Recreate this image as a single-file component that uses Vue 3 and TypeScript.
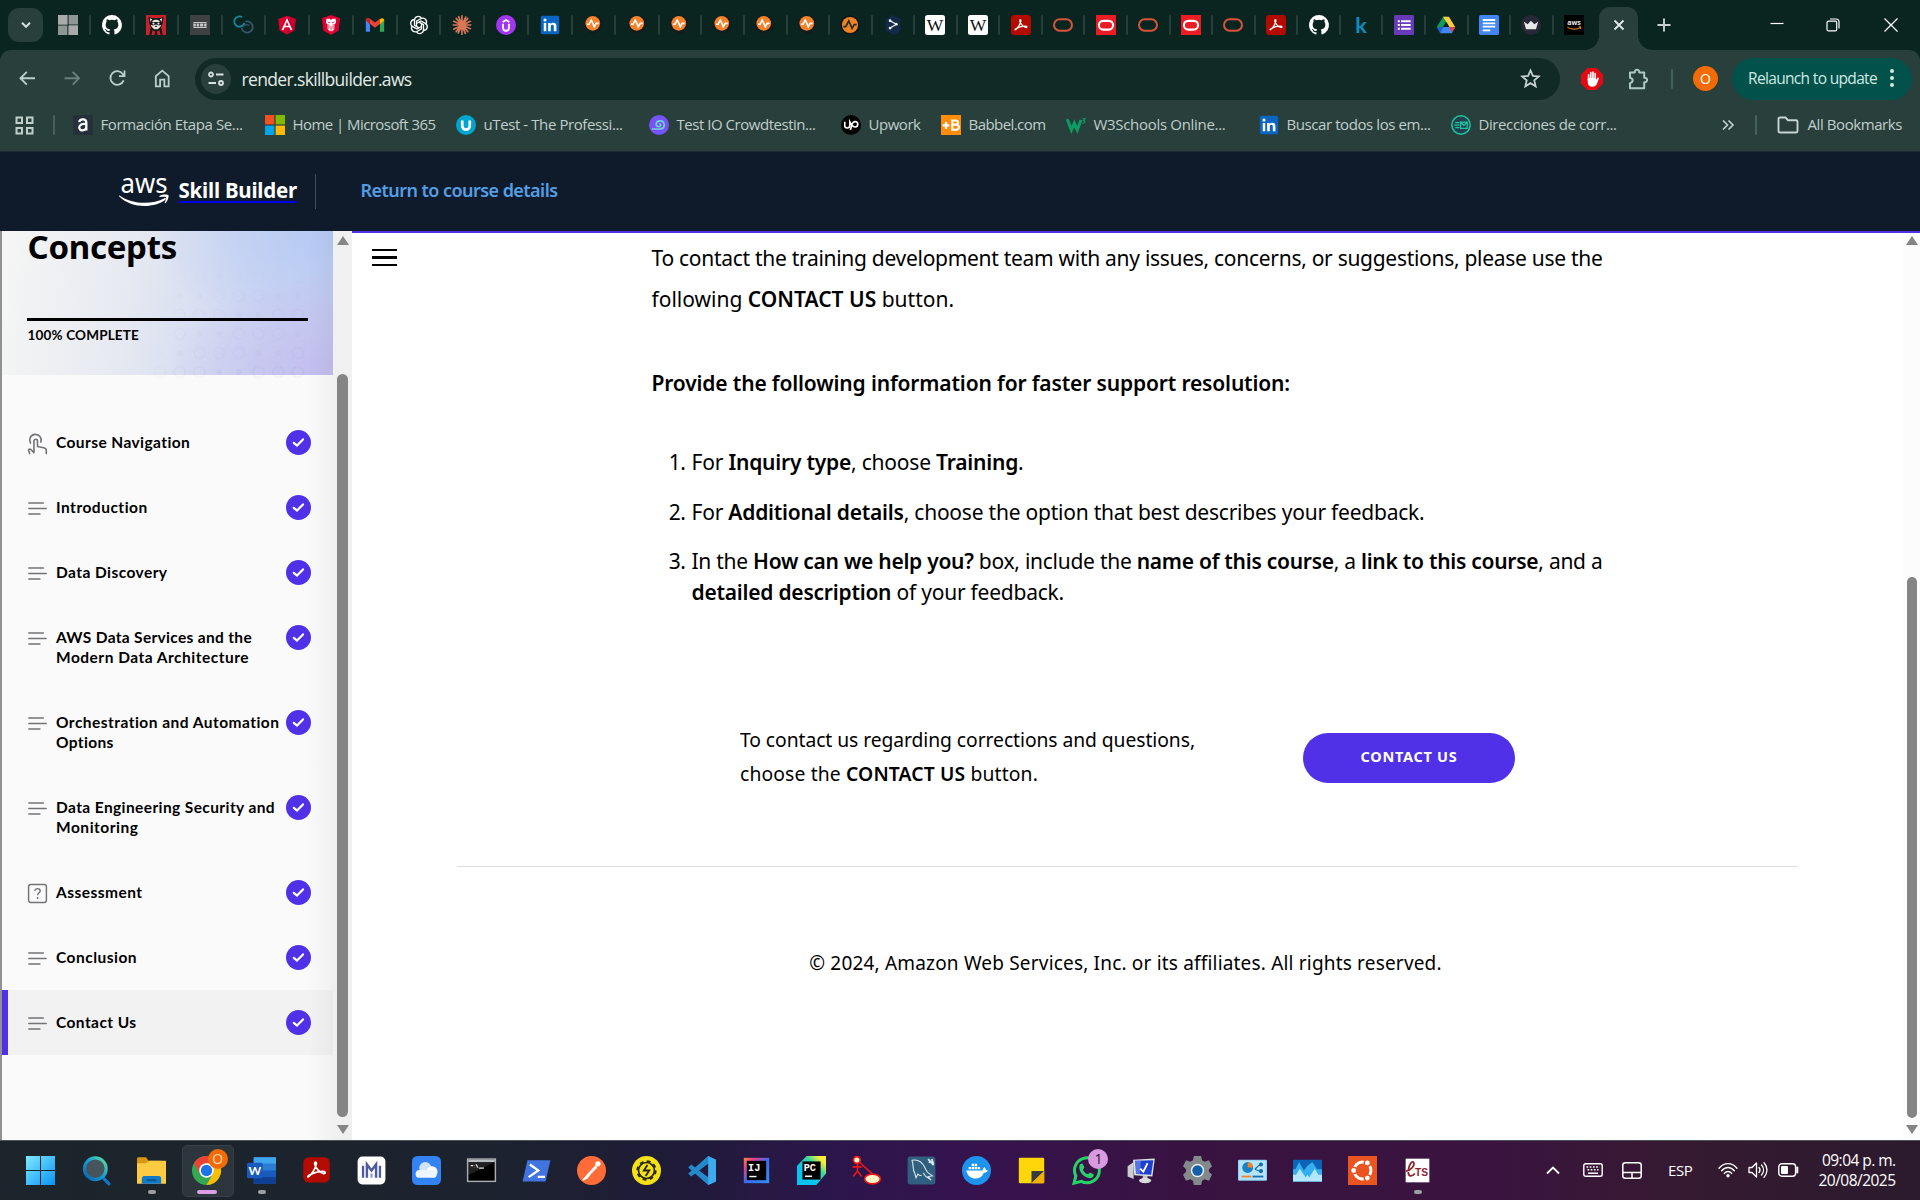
<script setup lang="ts">
interface Lesson { lines: string[]; icon: string; active?: boolean }
interface Bookmark { icon: string; label: string; text: number; cell: number }
interface TaskItem { icon: string; state?: 'open' | 'focused' }

/* Spreads a single line of text over a known width by adjusting its tracking. */
const vFit = {
  mounted(el: HTMLElement, binding: { value: number }) {
    const count = (el.textContent ?? '').length
    const width = el.getBoundingClientRect().width
    if (count > 0) el.style.letterSpacing = `${((binding.value - width) / count).toFixed(4)}px`
  },
}

const github = '<path fill="#fff" d="M12 0a12 12 0 0 0-3.8 23.4c.6.1.8-.3.8-.6v-2.200c-3.300.7-4-1.400-4-1.400-.5-1.400-1.300-1.800-1.300-1.800-1.100-.7.1-.7.1-.7 1.200.1 1.800 1.200 1.800 1.200 1.100 1.800 2.800 1.300 3.500 1 .1-.8.4-1.300.8-1.600-2.700-.3-5.500-1.300-5.500-5.900 0-1.300.5-2.400 1.200-3.200-.1-.3-.5-1.500.1-3.200 0 0 1-.3 3.300 1.200a11.500 11.500 0 0 1 6 0c2.300-1.500 3.300-1.200 3.300-1.200.7 1.700.2 2.900.1 3.200.8.8 1.200 1.900 1.200 3.200 0 4.600-2.800 5.600-5.500 5.900.4.4.8 1.100.8 2.200v3.300c0 .3.2.7.8.6A12 12 0 0 0 12 0z"/>'
const linkedin = '<rect x="1" y="1" width="22" height="22" rx="2" fill="#0a66c2"/><rect x="4.500" y="9.500" width="3" height="10" fill="#fff"/><circle cx="6" cy="6" r="1.900" fill="#fff"/><path fill="#fff" d="M9.800 9.500h2.900v1.400c.6-1 1.700-1.700 3.200-1.700 3 0 3.800 1.900 3.800 4.600v5.700h-3.100v-5.200c0-1.400-.3-2.500-1.700-2.500-1.500 0-2 1.100-2 2.500v5.200H9.800z"/>'
const adobe = '<path d="M5.500 17.500c2-1.200 5.500-5.800 6.400-10.500.3-1.800-1.700-1.800-1.400 0 .6 3.600 4.500 7.500 7.400 8 1.800.2 1.600-1.700-.2-1.700-3.800-.1-8 1.200-11.500 2.900-1.400.8-1.800 2.200-.7 1.300z" fill="none" stroke="#fff" stroke-width="1.500"/>'

const glyphs: Record<string, string> = {
  windowsGrey: '<path fill="#8f9794" d="M0 0h11.300v11.300H0zM12.700 0H24v11.300H12.700zM0 12.700h11.300V24H0zM12.700 12.700H24V24H12.700z"/><path fill="#aaa" d="M0 0h11.300v11.300H0zM12.700 12.700H24V24H12.700z"/>',
  github,
  raccoon: '<rect width="24" height="24" fill="#c9222b"/><path fill="#17191c" d="M3 2l4.500 1.500h9L21 2l-.8 8-2.200 5 1.500 3H4.500L6 15l-2.200-5z"/><path fill="#e9e4dc" d="M4.800 4l2.700 1.500L5 8zM19.200 4l-2.700 1.500L19 8zM7 7.500c3-2.500 7-2.500 10 0l-1.500 1h-7zM5.500 12l3 .5 3.500-1 3.500 1 3-.5-2 3-2.500 2h-4l-2.500-2z"/><circle cx="9" cy="10.300" r="1.300" fill="#e9e4dc"/><circle cx="15" cy="10.300" r="1.300" fill="#e9e4dc"/><path fill="#111" d="M11 13h2v1.500h-2z"/><path fill="#17191c" d="M5 18h14l1 6H4z"/><path fill="#c9222b" d="M8 18l3 2-1 4H6.500zM16 18l-3 2 1 4h3.500z"/>',
  badge: '<rect width="24" height="24" fill="#3f4041"/><path fill="#c3c7c6" d="M4 8.500h16v1H4zM4 14.500h16v1H4zM4 10.300h3v3.400H4zM8 10.300h3v3.400H8zM12 10.300h4v3.400h-4zM17 10.300h3v3.400h-3z"/>',
  rings: '<path d="M13.700 9.500A6.200 6.200 0 1 1 11 2.500" fill="none" stroke="#12889b" stroke-width="2.200"/><path d="M15 8a6.700 6.700 0 1 1-4.500 8" fill="none" stroke="#35566c" stroke-width="2.200"/><path d="M12 14c2-2.500 5-3 7.500-1.500" fill="none" stroke="#35566c" stroke-width="1.500"/>',
  angular: '<path fill="#dd0031" d="M12 1l10.500 3.800-1.600 13.700L12 23.500l-8.900-5L1.500 4.800z"/><path fill="#c3002f" d="M12 1l10.500 3.800-1.600 13.700L12 23.500z"/><path fill="#fff" fill-rule="evenodd" d="M12 3.500L5.500 18h2.400l1.300-3.300h5.600l1.300 3.300h2.400zm0 4.700l2 4.600h-4z"/>',
  primeng: '<path fill="#dd0031" d="M12 0l11 4-2 15-9 5-9-5L1 4z"/><path fill="#fff" d="M6.500 4.500h4L12 6l1.500-1.500h4l.5 5-2 1.500v6l-2.500 2.500h-3L8 17v-6L6 9.500z"/><path d="M9.500 11v6M14.500 11v6M12 13v7M8 8.500l3 1M16 8.500l-3 1" stroke="#dd0031" stroke-width=".9"/>',
  gmail: '<path fill="#4285f4" d="M1 5.500V20h5v-9z"/><path fill="#34a853" d="M18 11v9h5V5.500z"/><path fill="#ea4335" d="M1 6c0-3 3-3 4.500-1.700L12 9l6.500-4.700L19 10l-7 5.300L5 10z"/><path fill="#fbbc04" d="M18 5c2-2 5-1.500 5 1.500L18 11z"/><path fill="#c5221f" d="M1 6c0-3 3-3 5-1v6z"/>',
  openai: '<g fill="none" stroke="#fff" stroke-width="1.600"><path d="M9 13.700V7.500l5-3c4.500-2.300 8.500 2 6.500 6"/><path d="M9 13.700V7.500l5-3c4.500-2.300 8.500 2 6.500 6" transform="rotate(60 12 12)"/><path d="M9 13.700V7.500l5-3c4.500-2.300 8.500 2 6.500 6" transform="rotate(120 12 12)"/><path d="M9 13.700V7.500l5-3c4.500-2.300 8.500 2 6.500 6" transform="rotate(180 12 12)"/><path d="M9 13.700V7.500l5-3c4.500-2.300 8.500 2 6.500 6" transform="rotate(240 12 12)"/><path d="M9 13.700V7.500l5-3c4.500-2.300 8.500 2 6.500 6" transform="rotate(300 12 12)"/></g>',
  claude: '<path stroke="#d97757" stroke-width="2" stroke-linecap="round" d="M12 1v22M1.500 12h21M5 4l14 16M19 4L5 20M8 2l8 20M16.500 2.500l-9 19M2 7.500l20 9M2 17l20-9.500"/>',
  udemy: '<circle cx="12" cy="12" r="12" fill="#a435f0"/><path fill="none" stroke="#fff" stroke-width="2.200" d="M8 8.500L12 6l4 2.500M8.500 10.500v5c0 4.500 7 4.500 7 0v-5"/>',
  linkedin,
  pulse: '<circle cx="11" cy="11" r="11" fill="#14181b" opacity=".55"/><circle cx="10.500" cy="10" r="8.800" fill="#f5822a"/><path d="M3.500 11h2.700l2.500-5 3.700 8 2.200-4h3" fill="none" stroke="#fff" stroke-width="1.900"/>',
  pulseDark: '<circle cx="12" cy="12" r="11.700" fill="#111417"/><circle cx="12" cy="12" r="9.700" fill="#ee8322"/><path d="M4 14h3l3.500-7 4 9 2.500-4.500h3" fill="none" stroke="#25292c" stroke-width="2"/>',
  hexagon: '<path fill="#132a49" d="M12 0l9 5v14l-7 5-11-5V5z"/><path d="M8.500 7L16 11l-7.500 4.500" fill="none" stroke="#e7eef0" stroke-width="1.500"/><circle cx="8.500" cy="6.800" r="1.600" fill="#fff"/><circle cx="8.500" cy="15.700" r="1.600" fill="#fff"/><circle cx="16" cy="11" r="1.600" fill="#fff"/>',
  wiki: '<rect width="24" height="24" rx="3" fill="#fff"/><text x="12" y="19" font-family="Liberation Serif, serif" font-size="21" text-anchor="middle" fill="#111">W</text>',
  acrobat: `<rect width="24" height="24" rx="4" fill="#b30b00"/>${adobe}`,
  oracle: '<rect x="1.200" y="5.200" width="21.600" height="13.600" rx="6.800" fill="none" stroke="#d6543c" stroke-width="2.400"/>',
  oracleRed: '<rect width="24" height="24" fill="#ec1c24"/><rect x="3.500" y="7" width="17" height="10.500" rx="5.200" fill="none" stroke="#fff" stroke-width="2.500"/>',
  kay: '<text x="12" y="21.500" font-family="Lato, sans-serif" font-weight="700" font-size="26" text-anchor="middle" fill="#078fc0">k</text>',
  forms: '<rect width="24" height="24" rx="1.500" fill="#673ab7"/><path d="M8.500 7.500H20M8.500 12H20M8.500 16.500H20M4.500 7.500H7M4.500 12H7M4.500 16.500H7" stroke="#fff" stroke-width="2.300"/>',
  drive: '<path fill="#0f9d58" d="M8.500 2H12l1 6-7.500 13L1 14.500z"/><path fill="#ffcd40" d="M8.500 2h7L23 14.500h-7z"/><path fill="#4285f4" d="M5.500 14.500H23L19 22H5z"/><path fill="#1e62d0" d="M1 14.500h8L5 22z"/><path fill="#0a2420" d="M12 8l3.800 6.500H8.200z"/><path fill="#ea4335" d="M16 14.500h7L19.500 21z"/>',
  docs: '<rect width="24" height="24" rx="2" fill="#4285f4"/><path d="M4.500 6h15M4.500 10h15M4.500 14h15M4.500 18.500h9" stroke="#fff" stroke-width="2.200"/>',
  crown: '<circle cx="12" cy="12" r="12" fill="#272735"/><path fill="#e8e8ea" d="M3.500 8l4.500 3 4-4 4 4 4.500-3-2.500 9H6z"/>',
  awsTab: '<rect width="24" height="24" fill="#000"/><text x="12" y="12.500" font-family="Noto Sans, sans-serif" font-weight="600" font-size="8.500" text-anchor="middle" fill="#fff">aws</text><path d="M4 14.500c5 3.200 11 3.200 15.500.5M17.500 14.300l2.700-.1-.6 2.600" fill="none" stroke="#f90" stroke-width="1.200"/>',
  aBook: '<rect width="24" height="24" rx="1" fill="#25303b"/><path d="M7.500 8.500C8 4 16 4 16 9v9.500M16 11c-5-1-8.500.5-8.500 4 0 5 8.500 4.500 8.500-.5" fill="none" stroke="#fff" stroke-width="2.700"/>',
  microsoft: '<path fill="#f25022" d="M0 0h11.300v11.300H0z"/><path fill="#7fba00" d="M12.700 0H24v11.300H12.700z"/><path fill="#00a4ef" d="M0 12.700h11.300V24H0z"/><path fill="#ffb900" d="M12.700 12.700H24V24H12.700z"/>',
  utest: '<circle cx="12" cy="12" r="12" fill="#00a6cf"/><path d="M7.500 6.500V13c0 6 9 6 9 0V6.500" fill="none" stroke="#fff" stroke-width="3.200"/>',
  testio: '<circle cx="12" cy="12" r="12" fill="#7553f6"/><path d="M3.500 16.800h9.500c7.500-.5 6.500-10 0-9.800-5.500.3-5.800 7-1.500 7 3.200 0 3-3.500.8-3.500" fill="none" stroke="#6fd3d6" stroke-width="2"/>',
  upwork: '<circle cx="12" cy="12" r="12" fill="#000"/><path d="M4.500 8v4.500c0 4 6 4 6 0V8l3.500 6M11.300 18l2.200-7.500c1.600-4 6.800-3 6.600.8-.3 4-5 4-6.500 1" fill="none" stroke="#fff" stroke-width="1.900"/>',
  babbel: '<rect width="24" height="24" fill="#ff8d0b"/><path d="M2 12.500h8M6 8.500v8" stroke="#fff" stroke-width="2.600"/><path d="M13.500 6.500h4.300c3.500 0 3.300 4.700 0 5h-4zM13.500 11.700h5c4 0 4 6-.2 6h-4.800z" fill="none" stroke="#fff" stroke-width="2.400"/>',
  w3: '<path d="M1.500 5l5 13 3.500-8 3.500 8L18 6" fill="none" stroke="#0a9e65" stroke-width="3.600"/><path d="M19.500 4.500h3.500l-2 2c2.500.5 2 3.800-1.500 3" fill="none" stroke="#0a9e65" stroke-width="1.300"/>',
  mail: '<circle cx="12" cy="12" r="11" fill="#264052" stroke="#17c99d" stroke-width="1.800"/><path d="M5 9h5M4 12h6M5 15h5M11.500 8.500h8v7.500h-8zM12 9l3.500 3.500L19 9" fill="none" stroke="#17c99d" stroke-width="1.500"/>',
  lines: '<path d="M3 6.300h15M3 12h18M3 17.700h11.500" stroke="#737377" stroke-width="1.700" stroke-linecap="round"/>',
  touch: '<path d="M4.700 11.500A6 6 0 1 1 15.500 10.500M8.300 17V9.500c0-2.500 3.700-2.500 3.700 0v5.700l6.500 1.200c2 .4 2.700 1.400 2.700 3V22.500M8.300 14.500V21.500L5 18.300c-1.800-1.200-3.200.6-1.700 2.300l.5 1.900" fill="none" stroke="#737377" stroke-width="1.700" stroke-linecap="round" stroke-linejoin="round"/>',
  quiz: '<rect x="2.700" y="2.700" width="18.600" height="18.600" rx="2.200" fill="none" stroke="#737377" stroke-width="1.500"/><path d="M9.300 9.400c0-3.400 5.500-3.300 5.500 0 0 2.100-2.700 2-2.700 4.300" fill="none" stroke="#737377" stroke-width="1.500"/><circle cx="12.100" cy="16.700" r="1" fill="#737377"/>',
  start: '<defs><linearGradient id="win" x1="0" y1="0" x2="1" y2="1"><stop stop-color="#7eeaff"/><stop offset="1" stop-color="#0a93f5"/></linearGradient></defs><path fill="url(#win)" d="M0 0h11.600v11.600H0zM12.400 0H24v11.600H12.400zM0 12.400h11.600V24H0zM12.400 12.400H24V24H12.400z"/>',
  search: '<defs><linearGradient id="lens" x1="1" y1="0" x2="0" y2="1"><stop stop-color="#5fe3a1"/><stop offset=".5" stop-color="#149bd7"/><stop offset="1" stop-color="#0563b0"/></linearGradient></defs><path d="M16.500 17l5.800 6" stroke="#1078c9" stroke-width="2.600" stroke-linecap="round"/><circle cx="11" cy="10.500" r="9" fill="#46555b" stroke="url(#lens)" stroke-width="2.600"/>',
  explorer: '<path fill="#d7980f" d="M0 2.500c0-1 .5-1.500 1.500-1.500h6l2 3H20v6H0z"/><path fill="#fccb41" d="M0 6h7.500l2.500-2h14v19H0z"/><path fill="#1279c9" d="M4 19c0-1.500.7-2.500 2-2.500h12c1.500 0 2 1 2 2.500v4H4z"/><path d="M8 20h8" stroke="#0b528f" stroke-width="1.500"/>',
  chrome: '<circle cx="12" cy="12" r="12" fill="#34a853"/><path fill="#ea4335" d="M12 0c4.500 0 8.300 2.500 10.400 6H12L6.800 15 1.600 6A12 12 0 0 1 12 0z"/><path fill="#fbbc04" d="M12 24l5.200-9L12 6h10.400A12 12 0 0 1 12 24z"/><circle cx="12" cy="12" r="6" fill="#fff"/><circle cx="12" cy="12" r="4.700" fill="#1a73e8"/>',
  word: '<rect x="5.500" y="1" width="18.500" height="22" rx="1" fill="#185abd"/><path fill="#41a5ee" d="M5.500 1H24v5.500H5.500z"/><path fill="#2b7cd3" d="M5.500 6.500H24V12H5.500z"/><path fill="#103f91" d="M5.500 17.500H24V23H5.500z"/><rect y="5.500" width="13" height="13" rx="1.300" fill="#185abd"/><text x="6.500" y="15.600" font-family="Lato, sans-serif" font-weight="700" font-size="10" text-anchor="middle" fill="#fff">W</text>',
  acrobatBig: `<rect x="1" y="1" width="22" height="21" rx="4.500" fill="#b30b00"/><g transform="translate(0 -.5)">${adobe}</g>`,
  mi: '<rect x=".5" y=".5" width="23" height="23" rx="4" fill="#fff"/><path d="M5 8v10M19 8v10" stroke="#4d5a9f" stroke-width="1.900"/><path d="M8.200 18V7l3.800 5 3.800-5v11" fill="none" stroke="#4d5a9f" stroke-width="2"/><path d="M12 14.500V18" stroke="#8c94c6" stroke-width="1.700"/>',
  cloud: '<rect width="24" height="24" rx="4.500" fill="#3483f5"/><circle cx="11" cy="10" r="5" fill="#cfe3fd"/><circle cx="16.500" cy="13" r="4.600" fill="#fff"/><rect x="3" y="11.500" width="17.500" height="6.500" rx="3.200" fill="#eef6ff"/>',
  cmd: '<rect x=".5" y="2.500" width="23" height="18.500" fill="#000" stroke="#a9adb0" stroke-width="1.200"/><path fill="#b9bec0" d="M1 3h22v2H1z"/><path d="M3 8h2M6 7.500v.3M6 9.500v.3M7.500 6.800l1.500 3M10 10h4" stroke="#ddd" stroke-width="1"/><path fill="#fff" opacity=".13" d="M1 5h22L1 16z"/>',
  powershell: '<path fill="#4174df" d="M4.500 3.500h19L19.500 21H.5z"/><path d="M6.500 7l7 5-8 5.500M13 17.300h6" fill="none" stroke="#fff" stroke-width="1.900"/>',
  postman: '<circle cx="12" cy="12" r="12" fill="#ff6c37"/><circle cx="17.300" cy="6.500" r="2.200" fill="#fff"/><path d="M15.800 8l-6 6.500-5 5.500 3.500-1.800 3-4 5-5" fill="#fff" stroke="#fff" stroke-width="1.300"/>',
  bolt: '<circle cx="12" cy="12" r="12" fill="#f5e216"/><circle cx="12" cy="12" r="7.700" fill="none" stroke="#262412" stroke-width="1.400" stroke-dasharray="3.200 2.850"/><circle cx="12" cy="12" r="6.600" fill="none" stroke="#262412" stroke-width="1.400"/><path d="M12.800 7.500L9.800 12h4.500l-3 4.500" fill="none" stroke="#262412" stroke-width="1.500"/>',
  vscode: '<path fill="#2489ca" d="M17.500 0L24 3v18l-6.500 3L1 9.500 3.500 7 18 18V6L3.500 17 1 14.500z"/><path fill="#3fa9ee" d="M17.500 0L24 3v18l-6.500 3z"/>',
  intellij: '<defs><linearGradient id="ij" x1="0" y1="0" x2="1" y2="1"><stop stop-color="#f58a3c"/><stop offset=".22" stop-color="#e8408a"/><stop offset=".5" stop-color="#3c6cf0"/><stop offset="1" stop-color="#2f8ff5"/></linearGradient></defs><rect x="1.500" y="1.500" width="21" height="21" fill="url(#ij)"/><rect x="4" y="4" width="16" height="16" fill="#000"/><text x="5" y="12.300" font-family="Liberation Mono, monospace" font-weight="700" font-size="8.500" fill="#fff">IJ</text><path d="M6 17h6" stroke="#fff" stroke-width="1.200"/>',
  pycharm: '<defs><linearGradient id="pc" x1="0" y1="1" x2="1" y2="0"><stop offset=".35" stop-color="#08c4f0"/><stop offset=".65" stop-color="#3fd6a0"/><stop offset=".85" stop-color="#f5ee3c"/></linearGradient></defs><path fill="url(#pc)" d="M8 0h16v14.500l-8 9.500H0V8z"/><rect x="4.500" y="4.500" width="15" height="15" fill="#000"/><text x="5.500" y="12.500" font-family="Liberation Mono, monospace" font-weight="700" font-size="8.500" fill="#fff">PC</text><path d="M6.500 16.800h6" stroke="#fff" stroke-width="1.300"/>',
  stickman: '<path d="M4.500 6v6.500M.5 9h7.500M4.500 12.500L1 17M4.500 12.500L8 17M6 5l11 10" fill="none" stroke="#ef1616" stroke-width="1.300"/><circle cx="4" cy="3.300" r="2.800" fill="#fff5c8" stroke="#ef1616" stroke-width="1.300"/><ellipse cx="17" cy="19" rx="6.500" ry="4" fill="#fff5c8" stroke="#ef1616" stroke-width="1.400"/>',
  mysql: '<rect x=".5" y=".5" width="23" height="23" rx="2" fill="#315f80"/><path d="M4 3.500c5-1 9 2 11 6.500 1 2.500 2 4 4 5l2 1.500-3.500.5 2.500 3-3.500-2.500c-1.500-.5-1.800-2-3-3.500M4 3.500c2 4 0 7 2.500 11l1 3.500 1.500-3c1 1 2 1.500 3 1" fill="none" stroke="#dce8ed" stroke-width=".9"/><path d="M17.500 2.500l4.500 5M20.500 2.500l1 3-3.500-.5" fill="none" stroke="#dce8ed" stroke-width="1.500"/>',
  docker: '<circle cx="12" cy="12" r="12" fill="#1d93ed"/><path fill="#fff" d="M3.500 12h13.500c.5-2 1-2.500 1.600-3l1.400 2.500 1.500.5c-1 2-2.500 1.800-3.500 2-2.700 7-13 6-14.500-2zM5.500 9h2v2h-2zM8 9h2v2H8zM10.500 9h2v2h-2zM13 9h2v2h-2zM8 6.500h2v2H8zM10.500 6.500h2v2h-2z"/>',
  sticky: '<rect x="1.500" y="1.500" width="21" height="21" rx="1" fill="#ffd60a"/><path fill="#383a3b" d="M12 12.500h10.500L12 22.500z"/><path fill="#f0b400" d="M22.500 12.500v10H12z"/>',
  whatsapp: '<path fill="none" stroke="#25d366" stroke-width="2.500" d="M1.700 22.500l1.500-6A10.300 10.300 0 1 1 7.700 21z"/><path fill="#25d366" d="M8.500 6l1.800 3.500-1.300 1.800c1 2 2.300 3.100 4.300 3.900l1.500-1.600 3.300 1.700c-.3 3.700-4 3.600-7 1.900C7.500 15 5 11 6.500 7z"/>',
  remote: '<path fill="#c9ced4" d="M.5 8.500l5-3.500v14L.5 17z"/><path fill="#dfe2e5" d="M5 3l18-1-2 15-15-1z"/><path fill="#1f3fd0" d="M6.500 4l15.300-.5-1.800 12-12.500-.7z"/><path fill="#8eb0f5" d="M6.500 4l5-.2-.8 11-3.200-.2z" opacity=".5"/><path d="M11 10.500l2.500 2.500L17 6" fill="none" stroke="#fff" stroke-width="1.500"/><path fill="#c3c6c8" d="M13 16.500h4v3h-4z"/><ellipse cx="15" cy="20.300" rx="5" ry="2.200" fill="#d8dadb"/>',
  settings: '<path fill="#84898c" d="M9 0h6l.8 3.500 2.200 1.300 3.500-1.300 2.500 5-2.500 2.500v2L24 15.500l-2.500 5-3.500-1.300-2.200 1.300L15 24H9l-.8-3.500L6 19.200l-3.500 1.300-2.500-5L2.500 13v-2L0 8.500l2.500-5L6 4.800l2.200-1.300z"/><circle cx="12" cy="12" r="5.500" fill="#e8edf0"/><circle cx="12" cy="12" r="4.300" fill="#1460a8"/>',
  panel: '<rect y="3" width="24" height="17.500" rx="1" fill="#8cd3f6"/><rect x="1" y="4" width="22" height="15.500" fill="#b5e4fb"/><circle cx="8" cy="9.500" r="4.500" fill="#1780c6"/><path fill="#f58220" d="M8 9.500V5a4.500 4.500 0 0 1 4.500 4.500z"/><path d="M14 11l3-3 3-1M14 11l5 2" fill="none" stroke="#176ca9"/><circle cx="19" cy="7" r="1.700" fill="#176ca9"/><circle cx="19" cy="12.500" r="1.700" fill="#176ca9"/><path d="M3 17h8" stroke="#f58220" stroke-width="1.500"/><path d="M12 17h9" stroke="#176ca9" stroke-width="1.500"/>',
  perf: '<rect y="3" width="24" height="18" rx="1" fill="#0d63b6"/><path fill="#35aef0" d="M0 11h2l3-6 4 7 3-4 4-3 4 6h4v10H0z"/><path fill="#b3e6ff" d="M0 15.500h2.500l3-5 5 7 1.500-2 1.500 2 4.500-7 3 5h3V21H0z"/>',
  ubuntu: '<rect width="24" height="24" fill="#e95420"/><circle cx="12" cy="12" r="7" fill="none" stroke="#fff" stroke-width="2.400"/><g fill="#fff" stroke="#e95420" stroke-width="1.200"><circle cx="4.700" cy="12" r="2.600"/><circle cx="16" cy="5.700" r="2.600"/><circle cx="16" cy="18.300" r="2.600"/></g>',
  ets: '<rect x="2.200" y="2.200" width="19.600" height="19.600" fill="#fff"/><path d="M2.500 12.500c4-.5 8-5 6-7.500C5.500 3.500 2 16.500 6.500 16.500c1.500 0 2.500-1 3.300-2" fill="none" stroke="#8f2630" stroke-width="1.500"/><text x="10" y="16.700" font-family="Liberation Sans, sans-serif" font-weight="700" font-size="8.500" fill="#8f2630">TS</text>',
}

const wideTabs = ['windowsGrey', 'github', 'raccoon', 'badge', 'rings', 'angular', 'primeng', 'gmail', 'openai', 'claude', 'udemy', 'linkedin', 'pulse']
const tabs = ['pulse', 'pulse', 'pulse', 'pulse', 'pulse', 'pulseDark', 'hexagon', 'wiki', 'wiki', 'acrobat', 'oracle', 'oracleRed', 'oracle', 'oracleRed', 'oracle', 'acrobat', 'github', 'kay', 'forms', 'drive', 'docs', 'crown', 'awsTab']

const bookmarks: Bookmark[] = [
  { icon: 'aBook', label: 'Formación Etapa Se...', text: 142, cell: 192 },
  { icon: 'microsoft', label: 'Home | Microsoft 365', text: 143, cell: 191 },
  { icon: 'utest', label: 'uTest - The Professi...', text: 139, cell: 193 },
  { icon: 'testio', label: 'Test IO Crowdtestin...', text: 139, cell: 192 },
  { icon: 'upwork', label: 'Upwork', text: 52, cell: 100 },
  { icon: 'babbel', label: 'Babbel.com', text: 77, cell: 125 },
  { icon: 'w3', label: 'W3Schools Online...', text: 132, cell: 193 },
  { icon: 'linkedin', label: 'Buscar todos los em...', text: 144, cell: 192 },
  { icon: 'mail', label: 'Direcciones de corr...', text: 138, cell: 170 },
]

const lessons: Lesson[] = [
  { lines: ['Course Navigation'], icon: 'touch' },
  { lines: ['Introduction'], icon: 'lines' },
  { lines: ['Data Discovery'], icon: 'lines' },
  { lines: ['AWS Data Services and the', 'Modern Data Architecture'], icon: 'lines' },
  { lines: ['Orchestration and Automation', 'Options'], icon: 'lines' },
  { lines: ['Data Engineering Security and', 'Monitoring'], icon: 'lines' },
  { lines: ['Assessment'], icon: 'quiz' },
  { lines: ['Conclusion'], icon: 'lines' },
  { lines: ['Contact Us'], icon: 'lines', active: true },
]
const lessonWidths: Record<string, number> = {
  'Course Navigation': 134.500, 'Introduction': 92, 'Data Discovery': 111.500,
  'AWS Data Services and the': 196, 'Modern Data Architecture': 193,
  'Orchestration and Automation': 224, 'Options': 58,
  'Data Engineering Security and': 219, 'Monitoring': 82.500,
  'Assessment': 86.500, 'Conclusion': 81, 'Contact Us': 80.500,
}

const taskbar: TaskItem[] = [
  { icon: 'start' }, { icon: 'search' }, { icon: 'explorer', state: 'open' }, { icon: 'chrome', state: 'focused' },
  { icon: 'word', state: 'open' }, { icon: 'acrobatBig' }, { icon: 'mi' }, { icon: 'cloud' }, { icon: 'cmd' },
  { icon: 'powershell' }, { icon: 'postman' }, { icon: 'bolt' }, { icon: 'vscode' }, { icon: 'intellij' },
  { icon: 'pycharm' }, { icon: 'stickman' }, { icon: 'mysql' }, { icon: 'docker' }, { icon: 'sticky' },
  { icon: 'whatsapp' }, { icon: 'remote' }, { icon: 'settings' }, { icon: 'panel' }, { icon: 'perf' },
  { icon: 'ubuntu' }, { icon: 'ets', state: 'open' },
]
const badges: Record<string, string> = { chrome: 'O', whatsapp: '1' }

/* Faint texture of rings and dots in the course banner. */
const texture = [0, 1, 2, 3, 4, 5, 6].flatMap((row) =>
  [0, 1, 2, 3, 4, 5, 6, 7].map((col) => ({
    x: 158 + col * 19.700,
    y: 27 + row * 19,
    ring: (col + row * 2) % 5 > 1,
    alpha: Math.max(0, 0.004 + row * 0.005 - (col < 1 ? 0.02 : 0)),
  })),
)
</script>

<template>
  <div class="screen">
    <header class="browser">
      <div class="tabstrip">
        <button class="tab-search">
          <svg width="12" height="12" viewBox="0 0 12 12"><path d="M2 3.800l4 4 4-4" fill="none" stroke="#d3e0dc" stroke-width="2" /></svg>
        </button>
        <div v-for="(t, i) in wideTabs" :key="'w' + i" class="tab wide"><svg class="fav" viewBox="0 0 24 24" v-html="glyphs[t]" /></div>
        <div v-for="(t, i) in tabs" :key="'n' + i" class="tab" :class="{ last: i === tabs.length - 1 }"><svg class="fav" viewBox="0 0 24 24" v-html="glyphs[t]" /></div>
        <div class="tab-active">
          <svg width="12" height="12" viewBox="0 0 12 12"><path d="M1.500 1.500l9 9M10.500 1.500l-9 9" stroke="#e3ece9" stroke-width="1.800" /></svg>
        </div>
        <svg class="new-tab" width="14" height="14" viewBox="0 0 14 14"><path d="M7 .5v13M.5 7h13" stroke="#c4d3cf" stroke-width="1.900" /></svg>
        <div class="window-controls">
          <svg width="14" height="14" viewBox="0 0 14 14"><path d="M.5 5.500h13" stroke="#fff" stroke-width="1.200" /></svg>
          <svg width="14" height="14" viewBox="0 0 14 14"><g fill="none" stroke="#fff" stroke-width="1.200"><rect x="1" y="3.200" width="9.700" height="9.700" rx="1.500" /><path d="M4 1h6c2 0 3 1 3 3v6.500" /></g></svg>
          <svg width="14" height="14" viewBox="0 0 14 14"><path d="M.5.5l13 13M13.500.5l-13 13" stroke="#fff" stroke-width="1.300" /></svg>
        </div>
      </div>

      <div class="toolbar">
        <div class="nav">
          <svg viewBox="0 0 24 24"><path d="M21 12H4M11.500 4.500L4 12l7.500 7.500" /></svg>
          <svg viewBox="0 0 24 24" class="dim"><path d="M3 12h17M12.500 4.500L20 12l-7.500 7.500" /></svg>
          <svg viewBox="0 0 24 24"><path d="M19.500 14.500A8 8 0 1 1 18.500 7l1.500 2M20.500 3v6.500H14" /></svg>
          <svg viewBox="0 0 24 24"><path d="M4.500 21.500V9.500L12 3l7.500 6.500v12h-5v-8h-5v8z" /></svg>
        </div>
        <div class="omnibox">
          <span class="site-info">
            <svg width="18" height="18" viewBox="0 0 18 18"><g fill="none" stroke="#d6e2df" stroke-width="1.800"><circle cx="4" cy="4.500" r="2" /><path d="M9 4.500h7.500M1.500 13H9" /><circle cx="14" cy="13" r="2" /></g></svg>
          </span>
          <span v-fit="170" class="url">render.skillbuilder.aws</span>
          <svg class="star" width="21" height="21" viewBox="0 0 24 24"><path d="M12 2.800l2.700 6.300 6.800.6-5.200 4.500 1.600 6.700-5.900-3.600-5.900 3.600 1.600-6.700-5.200-4.500 6.800-.6z" fill="none" stroke="#c6d3d0" stroke-width="2" /></svg>
        </div>
        <svg class="blocker" width="22" height="22" viewBox="0 0 24 24"><path fill="#e50914" d="M7 0h10l7 7v10l-7 7H7l-7-7V7z" /><path d="M8.300 14V7.500M10.700 12V5M13.100 12V4.500M15.500 13V6" stroke="#fff" stroke-width="1.800" stroke-linecap="round" /><path fill="#fff" d="M7.400 11h9v2l1.300-2c.7-1 2-.5 1.700.7l-2.200 6c-1.700 4-9.800 3.500-9.800-2z" /></svg>
        <svg class="puzzle" width="24" height="24" viewBox="0 0 24 24"><path d="M4 5.500h4.800c-.6-3.800 5-3.800 4.400 0h5v5.300c3.800-.6 3.800 5 0 4.400v6H4v-5c3.500-.8 3.500-5 0-5.500z" fill="none" stroke="#adc9c3" stroke-width="2" stroke-linejoin="round" /></svg>
        <span class="divider tools" />
        <span class="avatar">O</span>
        <div class="relaunch">
          <span v-fit="129">Relaunch to update</span>
          <i class="kebab" />
        </div>
      </div>

      <div class="bookmarks">
        <svg class="apps" width="19" height="19" viewBox="0 0 19 19"><g fill="none" stroke="#c1cfcb" stroke-width="2"><rect x="1.500" y="1.500" width="5.500" height="5.500" /><rect x="12" y="1.500" width="5.500" height="5.500" /><rect x="1.500" y="12" width="5.500" height="5.500" /><rect x="12" y="12" width="5.500" height="5.500" /></g></svg>
        <span class="divider start" />
        <div v-for="b in bookmarks" :key="b.label" class="bookmark" :style="{ width: b.cell + 'px' }">
          <svg class="fav" viewBox="0 0 24 24" v-html="glyphs[b.icon]" />
          <span v-fit="b.text">{{ b.label }}</span>
        </div>
        <svg class="more" width="12" height="12" viewBox="0 0 12 12"><path d="M1 1.500L5.500 6 1 10.500M6.500 1.500L11 6l-4.500 4.500" fill="none" stroke="#c1cfcb" stroke-width="1.700" /></svg>
        <span class="divider end" />
        <svg class="folder" width="22" height="18" viewBox="0 0 22 18"><path d="M1.500 15V3c0-.9.500-1.500 1.500-1.500h5.500l2.500 2.700h8c1 0 1.500.6 1.500 1.500V15c0 1-.5 1.500-1.500 1.500H3c-1 0-1.500-.5-1.500-1.500z" fill="none" stroke="#c8d4d1" stroke-width="1.900" /></svg>
        <span v-fit="94.500" class="all">All Bookmarks</span>
      </div>
    </header>

    <nav class="site-header">
      <a class="logo">
        <svg class="aws" width="50" height="32" viewBox="0 0 50 32">
          <text x="25" y="17.500" text-anchor="middle" textLength="47" lengthAdjust="spacingAndGlyphs" font-family="Noto Sans, sans-serif" font-size="28" fill="#fff">aws</text>
          <path d="M.5 20.500C13 29.500 33 30 45.500 23.200c1.300-.5 2 .6.9 1.500C35 33.500 12 33.500.3 21.500c-.5-.6-.2-1.300.2-1z" fill="#fff" />
          <path d="M40.500 21c3-2 8.500-1.800 9-.8.5 1.200-.8 6-3 7.800-.8.500-1 .2-.7-.5.8-2 1.700-4.600 1.200-5.300-.6-.7-3.800-.5-5.800-.3-1 .1-1.300-.4-.7-.9z" fill="#fff" />
        </svg>
        <span v-fit="118.500" class="brand">Skill Builder</span>
      </a>
      <span class="rule" />
      <a v-fit="197" class="return">Return to course details</a>
    </nav>

    <div class="page">
      <aside class="sidebar">
        <div class="banner">
          <svg class="texture" width="331" height="144" viewBox="0 0 331 144">
            <template v-for="(d, i) in texture" :key="i">
              <circle v-if="d.ring" :cx="d.x" :cy="d.y" r="5.500" fill="none" stroke="#39417a" stroke-width="1.500" :stroke-opacity="d.alpha" />
              <circle v-else :cx="d.x" :cy="d.y" r="3" fill="#39417a" :fill-opacity="d.alpha" />
            </template>
          </svg>
          <h1><span v-fit="149.500">Concepts</span></h1>
          <div class="progress" />
          <p><span v-fit="111.500">100% COMPLETE</span></p>
        </div>
        <ul class="lessons">
          <li v-for="l in lessons" :key="l.lines[0]" :class="{ active: l.active }">
            <svg class="kind" viewBox="0 0 24 24" v-html="glyphs[l.icon]" />
            <div class="title">
              <div v-for="t in l.lines" :key="t"><span v-fit="lessonWidths[t]">{{ t }}</span></div>
            </div>
            <svg class="done" width="25" height="25" viewBox="0 0 25 25"><circle cx="12.500" cy="12.500" r="12.500" fill="#5131e8" /><path d="M7.800 12.800l3.200 2.800 6-6.200" fill="none" stroke="#fff" stroke-width="2.200" stroke-linecap="round" /></svg>
          </li>
        </ul>
        <div class="edge" />
      </aside>
      <div class="scrollbar side">
        <i class="up" /><i class="thumb" /><i class="down" />
      </div>

      <main>
        <div class="burger"><i /><i /><i /></div>
        <div class="content">
          <article>
            <p><span v-fit="951">To contact the training development team with any issues, concerns, or suggestions, please use the</span></p>
            <p><span v-fit="302.500">following <b>CONTACT US</b> button.</span></p>
            <p class="lead"><span v-fit="638.500"><b>Provide the following information for faster support resolution:</b></span></p>
            <ol>
              <li><em>1.</em><div><span v-fit="332">For <b>Inquiry type</b>, choose <b>Training</b>.</span></div></li>
              <li><em>2.</em><div><span v-fit="733">For <b>Additional details</b>, choose the option that best describes your feedback.</span></div></li>
              <li>
                <em>3.</em>
                <div>
                  <div><span v-fit="911">In the <b>How can we help you?</b> box, include the <b>name of this course</b>, a <b>link to this course</b>, and a</span></div>
                  <div><span v-fit="372.500"><b>detailed description</b> of your feedback.</span></div>
                </div>
              </li>
            </ol>
          </article>
          <section class="contact">
            <div class="blurb">
              <div><span v-fit="455">To contact us regarding corrections and questions,</span></div>
              <div><span v-fit="298">choose the <b>CONTACT US</b> button.</span></div>
            </div>
            <button class="cta"><span v-fit="97">CONTACT US</span></button>
          </section>
          <footer><span v-fit="632.500">© 2024, Amazon Web Services, Inc. or its affiliates. All rights reserved.</span></footer>
        </div>
      </main>
      <div class="scrollbar main-bar">
        <i class="up" /><i class="thumb" /><i class="down" />
      </div>
    </div>

    <div class="taskbar">
      <div class="apps-row">
        <div v-for="a in taskbar" :key="a.icon" class="task" :class="a.state">
          <svg class="task-icon" :class="a.icon" viewBox="0 0 24 24" v-html="glyphs[a.icon]" />
          <span v-if="badges[a.icon]" class="badge" :class="a.icon">{{ badges[a.icon] }}</span>
        </div>
      </div>
      <div class="tray">
        <svg class="chev" width="14" height="10" viewBox="0 0 14 10"><path d="M1 8.500l6-6 6 6" fill="none" stroke="#fff" stroke-width="1.800" /></svg>
        <svg class="kbd" width="20" height="14" viewBox="0 0 20 14"><rect x=".8" y=".8" width="18.400" height="12.400" rx="1.800" fill="none" stroke="#fff" stroke-width="1.400" /><path d="M3.500 4h13M4.500 6.800h11" stroke="#fff" stroke-width="1.600" stroke-dasharray="1.700 1.500" /><path d="M5 10.200h10" stroke="#fff" stroke-width="1.500" /></svg>
        <svg class="pad" width="20" height="17" viewBox="0 0 20 17"><rect x=".8" y=".8" width="18.400" height="15.400" rx="2.500" fill="none" stroke="#fff" stroke-width="1.500" /><path d="M1 10.500h18M10 10.500V16" stroke="#fff" stroke-width="1.500" /></svg>
        <span v-fit="24.500" class="lang">ESP</span>
        <svg class="wifi" width="20" height="16" viewBox="0 0 20 16"><g fill="none" stroke="#fff" stroke-width="1.400" stroke-linecap="round"><path d="M1 6.300c5-6.200 13-6.200 18 0M3.700 8.800c3.500-4.400 9.100-4.400 12.600 0M6.300 11.400c2-2.600 5.400-2.600 7.400 0" /></g><circle cx="10" cy="13.800" r="1.700" fill="#fff" /></svg>
        <svg class="sound" width="20" height="18" viewBox="0 0 20 18"><g fill="none" stroke="#fff" stroke-width="1.300" stroke-linejoin="round" stroke-linecap="round"><path d="M1 6.500h3L8.500 2v14L4 11.500H1zM11 6.500c1.300 1.500 1.300 3.500 0 5M13.500 4c2.700 3 2.700 7 0 10M16 1.800c4 4.300 4 10.100 0 14.400" /></g></svg>
        <svg class="battery" width="21" height="14" viewBox="0 0 21 14"><rect x=".8" y=".8" width="16.800" height="12.400" rx="3" fill="none" stroke="#fff" stroke-width="1.400" /><rect x="3" y="3" width="7" height="8" rx="1" fill="#fff" /><path d="M19.300 4.500v5" stroke="#fff" stroke-width="2" stroke-linecap="round" /></svg>
        <div class="clock">
          <div><span v-fit="73.500">09:04 p. m.</span></div>
          <div><span v-fit="77">20/08/2025</span></div>
        </div>
      </div>
    </div>
  </div>
</template>

<style>
body { margin: 0; overflow: hidden; }
</style>

<style scoped>
* { box-sizing: border-box; }
.screen { width: 1920px; height: 1200px; display: flex; flex-direction: column; overflow: hidden; font-family: "Noto Sans", sans-serif; color: #000; background: #fff; }
svg { display: block; flex: none; overflow: visible; }
span { white-space: nowrap; }
b { font-weight: 600; }
button { border: 0; padding: 0; }
.fav { width: 20px; height: 20px; }

/* Browser chrome */
.browser { height: 151px; flex: none; background: #0a2420; font-family: "Open Sans", sans-serif; }
.tabstrip { height: 50px; display: flex; align-items: center; padding-left: 8px; }
.tab-search { width: 35px; height: 34px; border-radius: 11px; background: #283f3b; display: grid; place-items: center; margin-right: 3.500px; flex: none; }
.tab { width: 42.570px; height: 50px; flex: none; display: flex; align-items: center; justify-content: center; position: relative; }
.tab.wide { width: 43.770px; }
.tab.wide + .tab:not(.wide) { margin-left: .800px; }
.tab::after { content: ''; position: absolute; right: -1px; top: 14.500px; width: 2px; height: 20px; border-radius: 1px; background: #283f3b; }
.tab.last::after { display: none; }
.tab-active { align-self: flex-end; width: 39px; height: 43px; margin-left: 4.200px; border-radius: 11px 11px 0 0; background: #283f3b; display: grid; place-items: center; padding-bottom: 7px; position: relative; flex: none; }
.tab-active::before, .tab-active::after { content: ''; position: absolute; bottom: 0; width: 14px; height: 14px; }
.tab-active::before { left: -14px; background: radial-gradient(circle at 0 0, transparent 13.500px, #283f3b 14px); }
.tab-active::after { right: -14px; background: radial-gradient(circle at 100% 0, transparent 13.500px, #283f3b 14px); }
.new-tab { margin-left: 18.800px; }
.window-controls { margin-left: auto; display: flex; gap: 43.500px; padding-right: 22px; }
.window-controls svg:first-child { margin-right: -1.500px; }
.window-controls svg:nth-child(2) { margin-right: .500px; }
.toolbar { height: 57px; display: flex; align-items: center; background: #283f3b; border-radius: 11px 11px 0 0; }
.nav { display: flex; gap: 24.500px; margin-left: 17px; width: 178px; }
.nav svg { width: 20.500px; height: 20.500px; fill: none; stroke: #b9d0ca; stroke-width: 2.100; }
.nav .dim { stroke: #6c807b; }
.omnibox { width: 1365px; height: 42px; border-radius: 21px; background: #122a26; display: flex; align-items: center; padding: 0 19px 0 6px; }
.site-info { width: 30px; height: 30px; border-radius: 50%; background: #283f3b; display: grid; place-items: center; margin-right: 10.500px; }
.url { font-size: 17.500px; line-height: 24px; color: #e2ebe8; }
.star { margin-left: auto; }
.blocker { margin-left: 21px; }
.puzzle { margin-left: 23px; }
.divider { width: 2px; height: 20px; border-radius: 1px; background: #43605a; flex: none; }
.divider.tools { margin-left: 20.500px; }
.avatar { width: 25px; height: 25px; border-radius: 50%; background: #f26b05; color: #fff; font-size: 14px; line-height: 25px; text-align: center; margin-left: 20.500px; }
.relaunch { width: 180px; height: 42px; margin-left: 14px; border-radius: 21px; background: #02514a; color: #cfe9e4; font-size: 15.500px; display: flex; align-items: center; padding: 0 0 1px 16px; }
.kebab { width: 4px; height: 4px; border-radius: 50%; background: #cfe9e4; box-shadow: 0 -7px #cfe9e4, 0 7px #cfe9e4; margin-left: 13px; }
.bookmarks { height: 44px; display: flex; align-items: center; background: #283f3b; padding-bottom: 8px; color: #c0cecb; font-size: 15px; }
.bookmarks span { position: relative; top: -1px; }
.bookmarks .divider { top: 0; }
.bookmarks .apps { margin-left: 15px; }
.divider.start { margin: 0 18.500px 0 18.500px; }
.bookmark { display: flex; align-items: center; gap: 7.500px; flex: none; }
.more { margin-left: 100.500px; }
.divider.end { margin: 0 20px 0 21px; }
.all { margin-left: 9px; }

/* Site header */
.site-header { height: 80px; flex: none; background: #0f1b2a; display: flex; align-items: center; border-top: 1px solid #1c2a33; padding-bottom: 3px; }
.logo { display: flex; align-items: center; margin-left: 119px; gap: 9.500px; }
.aws { position: relative; top: 1px; }
.brand { font-weight: 700; font-size: 20.500px; line-height: 24px; color: #fff; text-decoration: underline; text-decoration-color: #0000ee; text-decoration-thickness: 2px; text-underline-offset: 3px; }
.rule { width: 1px; height: 35px; background: #414d5c; margin: 3px 45px 0 17.500px; }
.return { font-weight: 600; font-size: 18px; color: #539fe5; white-space: nowrap; }

/* Page */
.page { height: 909px; flex: none; display: flex; }
.sidebar { width: 333px; border-left: 2px solid #919191; background: #fafafa; position: relative; }
.edge { position: absolute; right: 0; top: 0; bottom: 0; width: 26px; background: linear-gradient(90deg, rgba(0, 0, 0, 0), rgba(0, 0, 0, .035)); }
.banner { height: 144px; padding-left: 25px; position: relative; display: flow-root; background: radial-gradient(ellipse 170px 100px at 100% 100%, #c3bdee, rgba(195, 189, 238, 0)), radial-gradient(ellipse 180px 110px at 100% 0, #b6caf3, rgba(182, 202, 243, 0)), linear-gradient(98deg, #f4f5f4 3%, #e6e9f1 38%, #d2daf2 68%, #c4ccf1); }
.texture { position: absolute; left: 0; top: 0; }
.banner h1 { margin: 5px 0 0 .5px; font-size: 33px; line-height: 22px; font-weight: 700; position: relative; }
.progress { width: 281px; height: 3px; background: #000; margin-top: 60px; position: relative; }
.banner p { margin: 3.500px 0 0 .5px; font: 700 13.500px/20px Lato, sans-serif; position: relative; }
.lessons { list-style: none; margin: 35px 0 0; padding: 0; }
.lessons li { display: flex; align-items: flex-start; padding: 22px 22px 23px 23.500px; position: relative; }
.lessons li.active { background: #f2f2f2; }
.lessons li.active::before { content: ''; position: absolute; left: 0; top: 0; width: 6px; height: 100%; background: #5131e8; }
.kind { width: 23px; height: 23px; margin: -.500px 0 -2.500px; }
.title { margin-left: 7.500px; font: 700 15.500px/20px Lato, sans-serif; flex: 1; white-space: nowrap; width: 230px; }
.done { margin: -2px 0 -3px; }
.scrollbar { display: flex; flex-direction: column; align-items: center; background: #f0f0f0; flex: none; }
.scrollbar .up, .scrollbar .down { width: 0; height: 0; border: 6.500px solid transparent; border-top: 0; border-bottom: 9px solid #858585; margin-top: 5px; }
.scrollbar .down { border-top: 9px solid #858585; border-bottom: 0; margin-top: 8px; }
.scrollbar .thumb { width: 11px; border-radius: 6px; background: #858585; }
.side { width: 19px; }
.side .thumb { height: 743px; margin-top: 129px; }
main { flex: 1; border-top: 2px solid #5131e8; position: relative; background: #fff; padding: 5px 0 0 105px; }
.burger { position: absolute; left: 20px; top: 15.500px; width: 25px; display: flex; flex-direction: column; gap: 5px; }
.burger i { height: 2.500px; background: #000; }
.main-bar { width: 17px; background: #fcfcfc; border-top: 2px solid #5131e8; }
.main-bar .up { margin-top: 3px; }
.main-bar .thumb { height: 541px; margin-top: 332px; width: 10px; }
.main-bar .down { margin-top: 7px; }
.content { width: 1341px; }
article { padding-left: 194.500px; font-size: 21px; }
article p { margin: 0; line-height: 40.700px; }
article .lead { margin-top: 43.500px; }
ol { list-style: none; margin: 43.500px 0 0; padding: 0; line-height: 30.800px; }
ol li { display: flex; margin-bottom: 18.600px; }
ol em { font-style: normal; width: 40px; padding-right: 6px; text-align: right; letter-spacing: -.4px; }
.contact { height: 143.500px; margin-top: 115.900px; border-bottom: 1px solid #dedede; display: flex; padding-left: 283px; }
.blurb { width: 563px; font-size: 19.300px; line-height: 34px; }
.cta { width: 212px; height: 50px; margin-top: 10px; border-radius: 25px; background: #5131e8; color: #fff; font: 700 14.500px/47px "Noto Sans", sans-serif; padding-bottom: 3px; }
footer { text-align: center; font-size: 19px; line-height: 30px; margin-top: 81.500px; padding-right: 4px; }

/* Taskbar */
.taskbar { height: 60px; flex: none; display: flex; color: #fff; border-top: 1px solid #4b5258; background: linear-gradient(90deg, #1c252b 0, #1c222e 26%, #1f1b38 35%, #2b164a 43%, #35134e 50%, #381341 62%, #3a143e 78%, #351a31 88%, #2b1a2d 100%); }
.apps-row { display: flex; margin-left: 13.500px; }
.task { width: 55.050px; height: 59px; display: grid; place-items: center; position: relative; flex: none; }
.task-icon { width: 29px; height: 29px; position: relative; top: -.500px; }
.task-icon.start { left: -.500px; }
.task.open::after, .task.focused::after { content: ''; position: absolute; left: 24px; bottom: 6px; width: 8px; height: 4px; border-radius: 2px; background: #9b9da1; }
.task.focused::after { left: 18px; width: 20px; background: #da9fe2; }
.task.focused::before { content: ''; position: absolute; left: 3px; top: 4px; width: 50px; height: 50px; border-radius: 5px; background: #2b353b; border: 1px solid #364047; }
.badge { position: absolute; width: 20px; height: 20px; border-radius: 50%; top: 8px; left: 29px; font: 14px/20px "Open Sans", sans-serif; text-align: center; background: #d99ae1; color: #22152a; }
.badge.chrome { background: #f26b05; color: #f8d9c2; }
.tray { margin-left: auto; width: 376px; display: flex; align-items: center; font-family: "Open Sans", sans-serif; padding: 0 24.500px 1px 0; }
.chev { margin-left: 1.500px; }
.kbd { margin-left: 23px; }
.pad { margin-left: 19.500px; }
.lang { font-size: 15px; margin-left: 26px; }
.wifi { margin-left: 25px; }
.sound { margin-left: 10px; }
.battery { margin-left: 10px; }
.clock { margin-left: auto; font-size: 15.500px; line-height: 20px; text-align: right; }
</style>
